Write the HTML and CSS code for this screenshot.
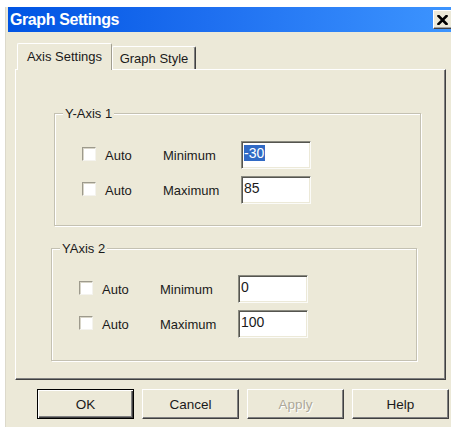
FILE: index.html
```html
<!DOCTYPE html>
<html>
<head>
<meta charset="utf-8">
<title>Graph Settings</title>
<link rel="stylesheet" href="styles.css">
</head>
<body>
<div class="dialog">
  <div class="titlebar">
    <span class="title">Graph Settings</span>
    <button class="close" aria-label="Close">
      <svg width="11" height="10" viewBox="0 0 11 10"><path d="M1.5 1 L9.5 9 M9.5 1 L1.5 9" stroke="#000" stroke-width="2.6" stroke-linecap="square"/></svg>
    </button>
  </div>
  <div class="content">
    <div class="tabs">
      <div class="tab active">Axis Settings</div>
      <div class="tab">Graph Style</div>
    </div>
    <div class="panel">
      <div class="group group-1">
        <span class="legend">Y-Axis 1</span>
        <div class="row">
          <span class="check"></span><span class="auto">Auto</span><span class="label">Minimum</span>
          <div class="field"><span class="sel">-30</span></div>
        </div>
        <div class="row">
          <span class="check"></span><span class="auto">Auto</span><span class="label">Maximum</span>
          <div class="field">85</div>
        </div>
      </div>
      <div class="group group-2">
        <span class="legend">YAxis 2</span>
        <div class="row">
          <span class="check"></span><span class="auto">Auto</span><span class="label">Minimum</span>
          <div class="field">0</div>
        </div>
        <div class="row">
          <span class="check"></span><span class="auto">Auto</span><span class="label">Maximum</span>
          <div class="field">100</div>
        </div>
      </div>
    </div>
    <div class="buttons">
      <button class="btn default">OK</button>
      <button class="btn">Cancel</button>
      <button class="btn disabled">Apply</button>
      <button class="btn">Help</button>
    </div>
  </div>
</div>
</body>
</html>
```

FILE: styles.css
```css
html, body {
  margin: 0;
  padding: 0;
  background: #ffffff;
  overflow: hidden;
}

body {
  font-family: "Liberation Sans", Arial, sans-serif;
  font-size: 13px;
  color: #1a1a1a;
}

.dialog {
  margin: 7px 0 0 5px;
  width: 451px;
  height: 430px;
  background: #ece9d8;
  border-left: 1px solid #dcd9cb;
  box-sizing: border-box;
}

/* caption bar */
.titlebar {
  margin-left: 2px;
  height: 25px;
  display: flex;
  align-items: center;
  background: linear-gradient(to right, #0054e3 0%, #1e6ff0 45%, #3d95ff 100%);
}

.title {
  padding-left: 2px;
  color: #fff;
  font-weight: bold;
  font-size: 16px;
  letter-spacing: -0.4px;
  line-height: 25px;
}

.close {
  margin: 0 2px 0 auto;
  width: 21px;
  height: 19px;
  padding: 0;
  display: flex;
  align-items: center;
  justify-content: center;
  background: #ece9d8;
  border: 1px solid;
  border-color: #fff #404040 #404040 #fff;
  box-shadow: inset -1px -1px #a0a0a0;
}

.close svg {
  display: block;
  margin-left: -2px;
}

.content {
  padding: 11px 0 0 9px;
}

/* tab strip */
.tabs {
  display: flex;
  align-items: flex-end;
  height: 26px;
  padding-left: 2px;
}

.tab {
  box-sizing: border-box;
  width: 84px;
  height: 23px;
  display: flex;
  align-items: center;
  justify-content: center;
  border-top: 1px solid #fff;
  border-left: 1px solid #fff;
  border-right: 1px solid #404040;
  box-shadow: inset -1px 0 #808080;
  border-radius: 2px 2px 0 0;
  background: #ece9d8;
  padding-top: 1px;
}

.tab.active {
  width: 95px;
  height: 27px;
  margin-bottom: -1px;
  position: relative;
  z-index: 1;
  padding-top: 0;
  padding-bottom: 1px;
  border-right-color: #a09d90;
  box-shadow: none;
}

.panel {
  box-sizing: border-box;
  width: 431px;
  height: 311px;
  border-top: 1px solid #fff;
  border-left: 1px solid #fff;
  border-right: 1px solid #404040;
  border-bottom: 1px solid #404040;
  box-shadow: inset -1px -1px #808080;
  padding-top: 43px;
}

/* etched group boxes */
.group {
  position: relative;
  box-sizing: border-box;
  height: 113px;
  border: 1px solid #c4c1b2;
  box-shadow: 1px 1px 0 #fff, inset 1px 1px 0 #fff;
  display: flex;
  flex-direction: column;
  gap: 7px;
  padding-left: 27px;
}

.group-1 {
  width: 367px;
  margin-left: 38px;
  padding-top: 27px;
}

.group-2 {
  width: 366px;
  margin-left: 35px;
  margin-top: 22px;
  padding-top: 26px;
}

.legend {
  position: absolute;
  top: -8px;
  left: 8px;
  padding: 0 2px;
  line-height: 15px;
  background: #ece9d8;
}

.row {
  display: flex;
  align-items: center;
  height: 28px;
}

.check {
  box-sizing: border-box;
  width: 14px;
  height: 14px;
  margin-right: 9px;
  background: #fff;
  border: 1px solid;
  border-color: #9d9a8c #f4f3ee #f4f3ee #9d9a8c;
  box-shadow: inset 1px 1px #d8d5c8;
  margin-top: -2px;
}

.auto {
  width: 58px;
}

.label {
  width: 78px;
}

.field {
  box-sizing: border-box;
  width: 70px;
  height: 28px;
  background: #fff;
  border: 1px solid;
  border-color: #8a8a80 #fbfbf8 #fbfbf8 #8a8a80;
  box-shadow: inset 1px 1px #55554f, inset -1px -1px #ece9d8;
  padding: 3px 0 0 2px;
  font-size: 14px;
  line-height: 17px;
}

.sel {
  background: #316ac5;
  color: #fff;
  padding: 0 1px 0 0;
}

/* dialog buttons */
.buttons {
  display: flex;
  gap: 8px;
  margin: 9px 0 0 22px;
}

.btn {
  box-sizing: border-box;
  width: 97px;
  height: 30px;
  padding: 0;
  font-family: "Liberation Sans", Arial, sans-serif;
  font-size: 13.5px;
  color: #1a1a1a;
  background: #ece9d8;
  border: 1px solid;
  border-color: #fff #404040 #404040 #fff;
  box-shadow: inset -1px -1px #808080;
}

.btn.default {
  border-color: #000;
  box-shadow: inset 1px 1px #fff, inset -1px -1px #404040, inset -2px -2px #808080;
}

.btn.disabled {
  color: #aca899;
  text-shadow: 1px 1px 0 #fff;
}
```
